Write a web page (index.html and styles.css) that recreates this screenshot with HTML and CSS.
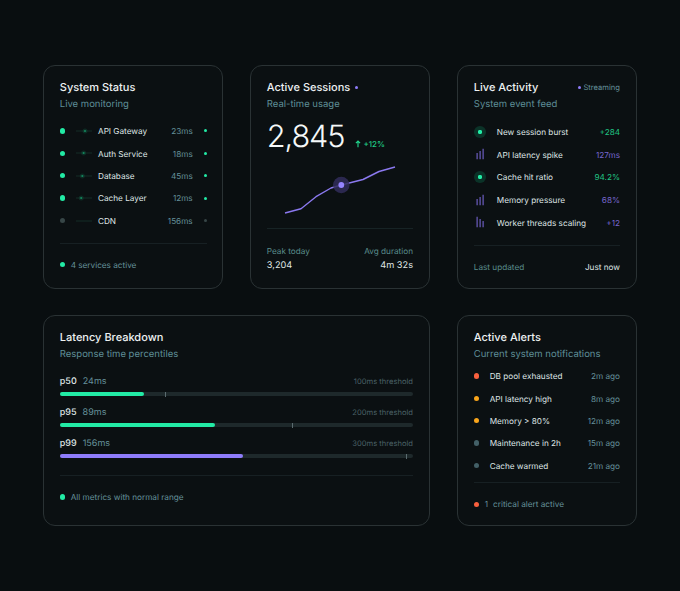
FILE: index.html
```
<!DOCTYPE html>
<html lang="en">
<head>
    <meta charset="UTF-8">
    <meta name="viewport" content="width=device-width, initial-scale=1.0">
    <title>System Dashboard</title>
    <link rel="stylesheet" href="styles.css">
</head>
<body>

    <main class="dashboard">

        <!-- System status -->
        <section class="card status">
            <h2>System Status</h2>
            <p class="subtitle">Live monitoring</p>
            <ul class="rows">
                <li>
                    <span class="dot green"></span>
                    <svg class="pulse" viewBox="0 0 16 8"><path d="M0 4H16"/><circle class="halo" cx="9" cy="4" r="2.5"/><circle cx="9" cy="4" r="1"/></svg>
                    <span class="name">API Gateway</span><span class="value">23ms</span><span class="tick"></span>
                </li>
                <li>
                    <span class="dot green"></span>
                    <svg class="pulse" viewBox="0 0 16 8"><path d="M0 4H16"/><circle class="halo" cx="7.6" cy="4" r="2.5"/><circle cx="7.6" cy="4" r="1"/></svg>
                    <span class="name">Auth Service</span><span class="value">18ms</span><span class="tick"></span>
                </li>
                <li>
                    <span class="dot green"></span>
                    <svg class="pulse" viewBox="0 0 16 8"><path d="M0 4H16"/><circle class="halo" cx="6.3" cy="4" r="2.5"/><circle cx="6.3" cy="4" r="1"/></svg>
                    <span class="name">Database</span><span class="value">45ms</span><span class="tick"></span>
                </li>
                <li>
                    <span class="dot green"></span>
                    <svg class="pulse" viewBox="0 0 16 8"><path d="M0 4H16"/><circle class="halo" cx="5.2" cy="4" r="2.5"/><circle cx="5.2" cy="4" r="1"/></svg>
                    <span class="name">Cache Layer</span><span class="value">12ms</span><span class="tick"></span>
                </li>
                <li>
                    <span class="dot off"></span>
                    <svg class="pulse" viewBox="0 0 16 8"><path d="M0 4H16"/></svg>
                    <span class="name">CDN</span><span class="value">156ms</span><span class="tick off"></span>
                </li>
            </ul>
            <div class="footer"><span class="dot green"></span><span>4 services active</span></div>
        </section>

        <!-- Active sessions -->
        <section class="card sessions">
            <h2>Active Sessions <span class="live-dot"></span></h2>
            <p class="subtitle">Real-time usage</p>
            <div class="total">
                <span class="number">2,845</span>
                <svg class="arrow" viewBox="0 0 6 8"><path d="M3 7.2V1.2M.9 3.2L3 1.1L5.1 3.2"/></svg>
                <span class="change">+12%</span>
            </div>
            <svg class="chart" viewBox="0 0 147 60">
                <polyline points="18,53 34,48.7 49,36.7 64,28 74.3,25 96,19.5 112,11.5 128,7"/>
                <circle class="halo" cx="74.3" cy="25" r="8.3"/>
                <circle cx="74.3" cy="25" r="2.9"/>
            </svg>
            <div class="stats">
                <div><span class="label">Peak today</span><span class="figure">3,204</span></div>
                <div class="right"><span class="label">Avg duration</span><span class="figure">4m 32s</span></div>
            </div>
        </section>

        <!-- Live activity -->
        <section class="card activity">
            <div class="title-row">
                <h2>Live Activity</h2>
                <span class="streaming"><span class="live-dot"></span>Streaming</span>
            </div>
            <p class="subtitle">System event feed</p>
            <ul class="rows">
                <li><span class="icon ring"></span><span class="name">New session burst</span><span class="value up">+284</span></li>
                <li>
                    <svg class="icon bars" viewBox="0 0 12 12"><path d="M3.1 5V11.3M6.1 3V11.3M9.1 .8V11.3"/></svg>
                    <span class="name">API latency spike</span><span class="value violet">127ms</span>
                </li>
                <li><span class="icon ring"></span><span class="name">Cache hit ratio</span><span class="value up">94.2%</span></li>
                <li>
                    <svg class="icon bars" viewBox="0 0 12 12"><path d="M3.1 5V11.3M6.1 3V11.3M9.1 .8V11.3"/></svg>
                    <span class="name">Memory pressure</span><span class="value violet">68%</span>
                </li>
                <li>
                    <svg class="icon bars" viewBox="0 0 12 12"><path d="M3.1 .8V11.3M6.1 3V11.3M9.1 5V11.3"/></svg>
                    <span class="name">Worker threads scaling</span><span class="value violet">+12</span>
                </li>
            </ul>
            <div class="footer"><span>Last updated</span><span class="now">Just now</span></div>
        </section>

        <!-- Latency breakdown -->
        <section class="card latency">
            <h2>Latency Breakdown</h2>
            <p class="subtitle">Response time percentiles</p>
            <div class="metrics">
                <div class="metric">
                    <div class="legend"><b>p50</b><span>24ms</span><small>100ms threshold</small></div>
                    <div class="track"><div class="fill" style="width: 23.9%"></div><i style="left: 29.8%"></i></div>
                </div>
                <div class="metric">
                    <div class="legend"><b>p95</b><span>89ms</span><small>200ms threshold</small></div>
                    <div class="track"><div class="fill" style="width: 43.9%"></div><i style="left: 65.8%"></i></div>
                </div>
                <div class="metric">
                    <div class="legend"><b>p99</b><span>156ms</span><small>300ms threshold</small></div>
                    <div class="track"><div class="fill purple" style="width: 52%"></div><i style="left: 98.1%"></i></div>
                </div>
            </div>
            <div class="footer"><span class="dot green"></span><span>All metrics with normal range</span></div>
        </section>

        <!-- Active alerts -->
        <section class="card alerts">
            <h2>Active Alerts</h2>
            <p class="subtitle">Current system notifications</p>
            <ul class="rows">
                <li><span class="dot red"></span><span class="name">DB pool exhausted</span><span class="value">2m ago</span></li>
                <li><span class="dot amber"></span><span class="name">API latency high</span><span class="value">8m ago</span></li>
                <li><span class="dot amber"></span><span class="name">Memory &gt; 80%</span><span class="value">12m ago</span></li>
                <li><span class="dot slate"></span><span class="name">Maintenance in 2h</span><span class="value">15m ago</span></li>
                <li><span class="dot slate"></span><span class="name">Cache warmed</span><span class="value">21m ago</span></li>
            </ul>
            <div class="footer"><span class="dot red"></span><span class="count">1</span><span>critical alert active</span></div>
        </section>

    </main>

</body>
</html>
```
FILE: styles.css
```
* {
    box-sizing: border-box;
}
body {
    margin: 0;
    font-family: Inter, sans-serif;
    font-size: 8.2px;
    text-rendering: geometricPrecision;
    color: #dfe5e5;
    background-color: #090e10;
}
h2, p, ul {
    margin: 0;
    padding: 0;
}
.dashboard {
    display: grid;
    grid-template-columns: 180px 180px 180px;
    grid-template-rows: 224px 211px;
    column-gap: 27px;
    row-gap: 26px;
    padding: 65px 43px 0;
}
.card {
    display: flex;
    flex-direction: column;
    padding: 15px 16px 0 15.8px;
    border: 1px solid #2a3234;
    border-radius: 12px;
    background-color: #0b1012;
}
h2 {
    font-size: 11px;
    font-weight: 500;
    line-height: 13.4px;
    color: #eef2f2;
}
.subtitle {
    font-size: 9.5px;
    line-height: 21px;
    color: #5f8f98;
}
.rows {
    list-style: none;
    margin-top: 4.4px;
}
.rows li {
    display: flex;
    align-items: center;
    height: 22.4px;
}
.name, .value {
    padding-top: .5px;
}
.name {
    flex: 1;
    white-space: nowrap;
}
.value {
    color: #65909a;
}
.footer {
    display: flex;
    align-items: center;
    gap: 5.5px;
    height: 43px;
    margin-top: 11px;
    border-top: 1px solid #172023;
    color: #65909a;
}

/* Dots */
.dot {
    width: 5.4px;
    height: 5.4px;
    flex: none;
    border-radius: 50%;
}
.green { background-color: #22eba5; }
.red { background-color: #f8603e; }
.amber { background-color: #f9a51b; }
.slate { background-color: #436067; }
.dot.off, .tick.off { background-color: #374647; }
.live-dot {
    display: inline-block;
    width: 3px;
    height: 3px;
    border-radius: 50%;
    background-color: #8e7cfa;
}

/* System status */
.status {
    padding-right: 14.8px;
}
.pulse {
    width: 16px;
    height: 8px;
    margin: 0 6px 0 10.8px;
}
.pulse path {
    stroke: #16352f;
    stroke-width: .8;
}
.pulse circle {
    fill: #128a5f;
}
.pulse .halo {
    fill: #12533f;
    opacity: .4;
}
.tick {
    width: 3px;
    height: 3px;
    margin: 0 .5px 0 11px;
    border-radius: 50%;
    background-color: #22eba5;
}

/* Active sessions */
.sessions .live-dot {
    margin-left: 2px;
    vertical-align: 2.5px;
}
.total {
    display: flex;
    align-items: baseline;
    height: 40px;
    margin-top: 2.4px;
    line-height: 38px;
}
.number {
    font-size: 30.7px;
    font-weight: 350;
    letter-spacing: -1.1px;
    color: #f5f8f8;
}
.arrow {
    width: 6px;
    height: 8px;
    margin: 0 2px 0 11px;
    fill: none;
    stroke: #22dc91;
    stroke-width: 1.1;
    position: relative;
    top: 1px;
}
.change {
    font-size: 8px;
    font-weight: 500;
    color: #20c985;
}
.chart {
    width: 147px;
    height: 60px;
    margin-top: 2.7px;
    fill: #9584ff;
}
.chart polyline {
    fill: none;
    stroke: #8b79ef;
    stroke-width: 1.4;
    stroke-linejoin: round;
}
.chart .halo {
    fill: #312d5a;
    fill-opacity: .85;
}
.stats {
    display: flex;
    justify-content: space-between;
    margin-top: 8px;
    padding-top: 16px;
    border-top: 1px solid #172325;
}
.stats span {
    display: block;
    line-height: 13.8px;
}
.label {
    color: #5a8d8c;
}
.stats .figure {
    font-size: 9.2px;
}
.right {
    text-align: right;
}

/* Live activity */
.title-row {
    display: flex;
    justify-content: space-between;
    align-items: center;
    height: 13.4px;
}
.streaming {
    font-size: 7.6px;
    color: #65909a;
}
.streaming .live-dot {
    margin-right: 2.5px;
    vertical-align: 1.3px;
}
.activity .subtitle {
    line-height: 22px;
}
.activity .rows {
    margin-top: 4px;
}
.activity .rows li {
    height: 22.7px;
}
.icon {
    width: 12px;
    height: 12px;
    margin-right: 11px;
}
.ring {
    border-radius: 50%;
    background: radial-gradient(circle, #22eba5 1.8px, #0b3328 2.5px);
}
.bars {
    fill: none;
    stroke: #7464cf;
    stroke-width: 1.1;
}
.up { color: #20c382; }
.violet { color: #7767cf; }
.activity .footer {
    justify-content: space-between;
    color: #5a8d8c;
}
.now {
    color: #dfe5e5;
}

/* Latency breakdown */
.latency {
    grid-column: span 2;
}
.metrics {
    margin-top: 8.6px;
}
.metric {
    height: 31.2px;
}
.legend {
    display: flex;
    align-items: center;
    height: 14px;
    font-size: 9px;
    color: #65909a;
}
.legend b {
    margin-right: 6px;
    font-weight: 500;
    color: #dfe5e5;
}
.legend small {
    margin-left: auto;
    font-size: 7.6px;
    color: #4a6166;
}
.track {
    position: relative;
    height: 4px;
    margin-top: 4px;
    border-radius: 2px;
    background-color: #1e292b;
}
.fill {
    height: 4px;
    border-radius: 2px;
    background-color: #22eba5;
}
.fill.purple {
    background-color: #8e7cfa;
}
.track i {
    position: absolute;
    top: 0;
    width: 1px;
    height: 5px;
    background-color: #5b6c6f;
}
.latency .footer {
    margin-top: 7.5px;
}

/* Active alerts */
.alerts .rows {
    margin-top: -.6px;
}
.alerts .rows .dot {
    margin-right: 10.5px;
}
.alerts .footer {
    margin-top: 5.7px;
}
.count {
    margin-right: -.5px;
}
```
